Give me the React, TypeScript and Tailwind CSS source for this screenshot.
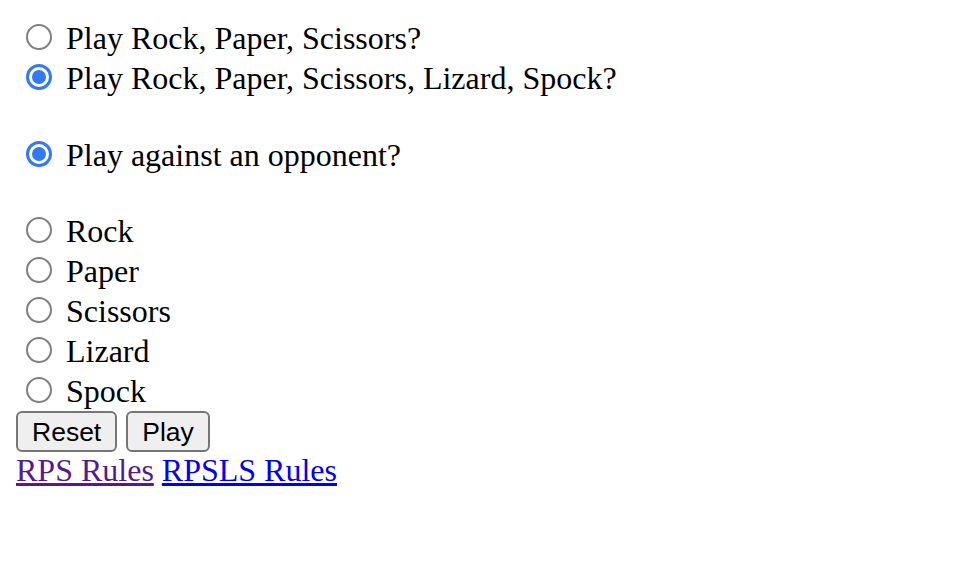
import React from 'react';

const serif = "font-['Liberation_Serif','Times_New_Roman',serif]";

function Radio({ checked }: { checked?: boolean }) {
  if (checked) {
    return (
      <span className="ml-[10px] mr-[14px] flex h-[26px] w-[26px] shrink-0 items-center justify-center rounded-full border-[3px] border-[#3478f6] bg-white">
        <span className="h-[14px] w-[14px] rounded-full bg-[#3478f6]" />
      </span>
    );
  }
  return <span className="ml-[10px] mr-[14px] h-[26px] w-[26px] shrink-0 rounded-full border-2 border-[#808080] bg-white" />;
}

function Row({ label, checked }: { label: string; checked?: boolean }) {
  return (
    <label className="flex h-[40px] items-center">
      <Radio checked={checked} />
      <span className="pt-[3px]">{label}</span>
    </label>
  );
}

export default function App() {
  const moves = ['Rock', 'Paper', 'Scissors', 'Lizard', 'Spock'];
  return (
    <div className={`min-h-[582px] bg-white p-[16px] text-[32px] leading-[37px] text-black ${serif}`}>
      <div className="pt-[1px]">
        <Row label="Play Rock, Paper, Scissors?" />
        <Row label="Play Rock, Paper, Scissors, Lizard, Spock?" checked />
      </div>
      <div className="h-[37px]" />
      <Row label="Play against an opponent?" checked />
      <div className="h-[36px]" />
      {moves.map((m) => (
        <Row key={m} label={m} />
      ))}
      <div className="flex gap-[9px] pt-[1px]">
        <button className="h-[41px] rounded-[6px] border-2 border-[#767676] bg-[#efefef] px-[14px] font-['Liberation_Sans',Arial,sans-serif] text-[26.5px] leading-[30px]">
          Reset
        </button>
        <button className="h-[41px] rounded-[6px] border-2 border-[#767676] bg-[#efefef] px-[14px] font-['Liberation_Sans',Arial,sans-serif] text-[26.5px] leading-[30px]">
          Play
        </button>
      </div>
      <div className="flex gap-[8px]">
        <a href="#" className="text-[#551a8b] underline">RPS Rules</a>
        <a href="#" className="text-[#0000ee] underline">RPSLS Rules</a>
      </div>
    </div>
  );
}
